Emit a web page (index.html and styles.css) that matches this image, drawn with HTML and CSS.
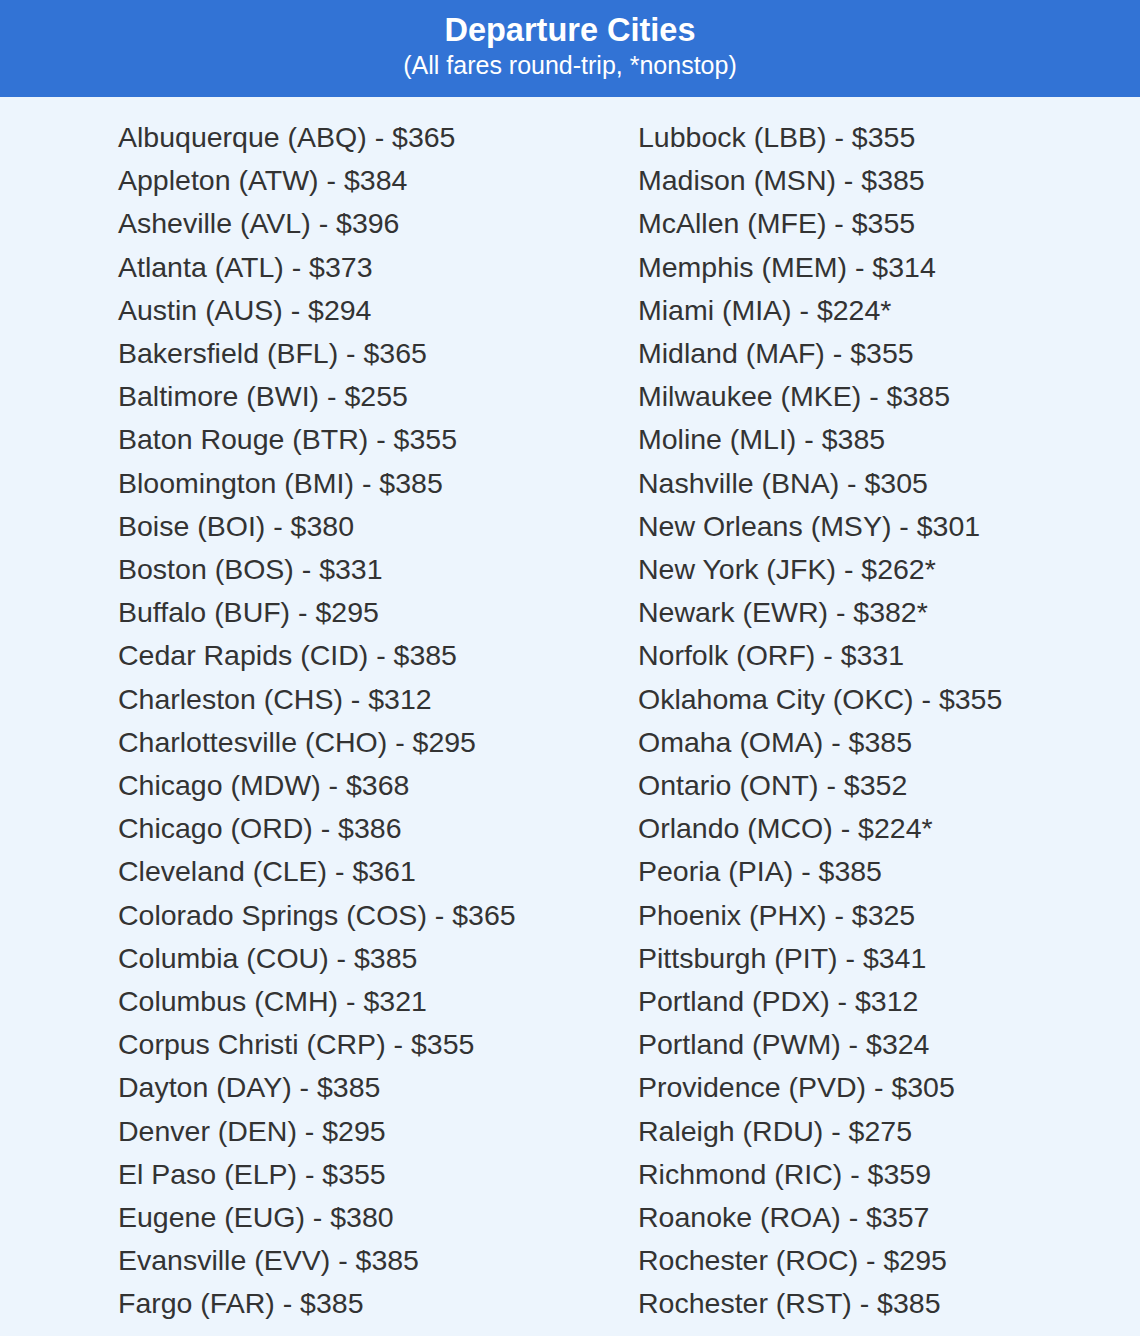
FILE: index.html
```html
<!DOCTYPE html>
<html>
<head>
<meta charset="utf-8">
<link rel="stylesheet" href="styles.css">
</head>
<body>
<header class="banner">
  <h1 class="title">Departure Cities</h1>
  <p class="subtitle">(All fares round-trip, *nonstop)</p>
</header>
<main class="cities">
  <ul class="col">
    <li>Albuquerque (ABQ) - $365</li>
    <li>Appleton (ATW) - $384</li>
    <li>Asheville (AVL) - $396</li>
    <li>Atlanta (ATL) - $373</li>
    <li>Austin (AUS) - $294</li>
    <li>Bakersfield (BFL) - $365</li>
    <li>Baltimore (BWI) - $255</li>
    <li>Baton Rouge (BTR) - $355</li>
    <li>Bloomington (BMI) - $385</li>
    <li>Boise (BOI) - $380</li>
    <li>Boston (BOS) - $331</li>
    <li>Buffalo (BUF) - $295</li>
    <li>Cedar Rapids (CID) - $385</li>
    <li>Charleston (CHS) - $312</li>
    <li>Charlottesville (CHO) - $295</li>
    <li>Chicago (MDW) - $368</li>
    <li>Chicago (ORD) - $386</li>
    <li>Cleveland (CLE) - $361</li>
    <li>Colorado Springs (COS) - $365</li>
    <li>Columbia (COU) - $385</li>
    <li>Columbus (CMH) - $321</li>
    <li>Corpus Christi (CRP) - $355</li>
    <li>Dayton (DAY) - $385</li>
    <li>Denver (DEN) - $295</li>
    <li>El Paso (ELP) - $355</li>
    <li>Eugene (EUG) - $380</li>
    <li>Evansville (EVV) - $385</li>
    <li>Fargo (FAR) - $385</li>
    <li>Fayetteville (XNA) - $394</li>
  </ul>
  <ul class="col">
    <li>Lubbock (LBB) - $355</li>
    <li>Madison (MSN) - $385</li>
    <li>McAllen (MFE) - $355</li>
    <li>Memphis (MEM) - $314</li>
    <li>Miami (MIA) - $224*</li>
    <li>Midland (MAF) - $355</li>
    <li>Milwaukee (MKE) - $385</li>
    <li>Moline (MLI) - $385</li>
    <li>Nashville (BNA) - $305</li>
    <li>New Orleans (MSY) - $301</li>
    <li>New York (JFK) - $262*</li>
    <li>Newark (EWR) - $382*</li>
    <li>Norfolk (ORF) - $331</li>
    <li>Oklahoma City (OKC) - $355</li>
    <li>Omaha (OMA) - $385</li>
    <li>Ontario (ONT) - $352</li>
    <li>Orlando (MCO) - $224*</li>
    <li>Peoria (PIA) - $385</li>
    <li>Phoenix (PHX) - $325</li>
    <li>Pittsburgh (PIT) - $341</li>
    <li>Portland (PDX) - $312</li>
    <li>Portland (PWM) - $324</li>
    <li>Providence (PVD) - $305</li>
    <li>Raleigh (RDU) - $275</li>
    <li>Richmond (RIC) - $359</li>
    <li>Roanoke (ROA) - $357</li>
    <li>Rochester (ROC) - $295</li>
    <li>Rochester (RST) - $385</li>
    <li>Sacramento (SMF) - $359</li>
  </ul>
</main>
</body>
</html>
```
FILE: styles.css
```css
html, body {
  margin: 0;
  padding: 0;
}
body {
  background: #edf5fd;
  font-family: "Liberation Sans", Arial, sans-serif;
  color: #333333;
  height: 1336px;
  overflow: hidden;
}
.banner {
  background: #3273d5;
  color: #ffffff;
  text-align: center;
  height: 97px;
  box-sizing: border-box;
  padding-top: 11px;
}
.title {
  margin: 0;
  font-size: 32.5px;
  font-weight: bold;
  line-height: 38px;
}
.subtitle {
  margin: 0;
  font-size: 25px;
  line-height: 32px;
}
.cities {
  display: grid;
  grid-template-columns: 520px 1fr;
  padding: 19px 0 0 118px;
}
.col {
  list-style: none;
  margin: 0;
  padding: 0;
}
.col li {
  font-size: 28.5px;
  line-height: 43.2px;
  white-space: nowrap;
}
```
